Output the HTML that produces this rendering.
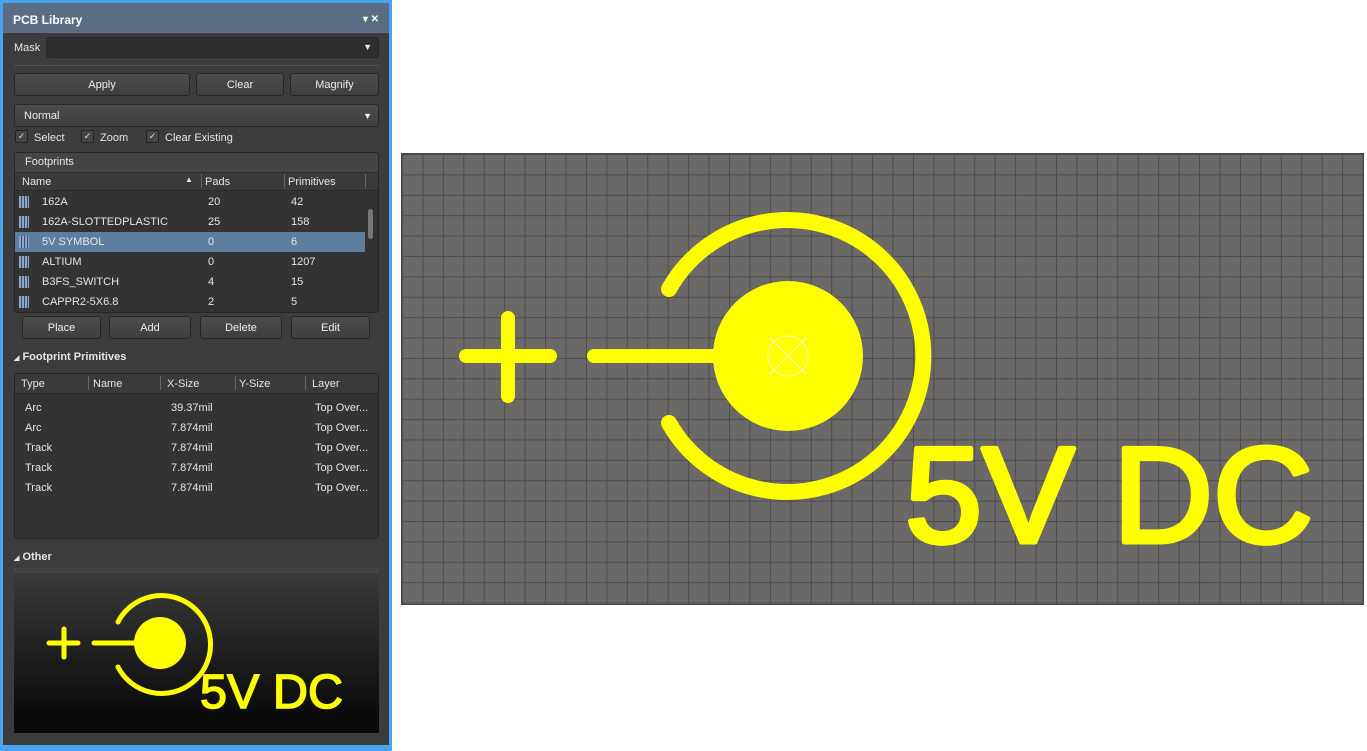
<!DOCTYPE html>
<html><head><meta charset="utf-8"><style>
*{box-sizing:border-box;margin:0;padding:0}
body{width:1367px;height:751px;background:#fff;position:relative;overflow:hidden;font-family:"Liberation Sans",sans-serif;font-size:11px;color:#e6e6e6}
.abs{position:absolute}
#panel{left:0;top:0;width:392px;height:751px;background:#4aa3ee}
#inner{left:3px;top:3px;width:386px;height:742px;background:#3c3c3c}
.title{left:0;top:0;width:386px;height:30px;background:#5b6d85;font-weight:bold;font-size:12px;color:#fff;padding:10px 10px}
.btn{position:absolute;height:23px;border:1px solid #262626;border-radius:3px;background:linear-gradient(#4c4c4c,#3e3e3e);text-align:center;line-height:23px;color:#eee}
.row{position:absolute;left:12px;width:350px;height:20px;line-height:20px}
.chip{position:absolute;left:4px;top:4px;width:10px;height:12px;background:repeating-linear-gradient(90deg,#8ea6c9 0 2px,#3c4a63 2px 3px)}
.cb{position:absolute;width:13px;height:13px;border:1px solid #222;background:#454545;border-radius:2px;color:#ddd;font-size:9px;line-height:11px;text-align:center}
#grid{left:401px;top:153px;width:963px;height:452px;background-color:#6b6967;
background-image:linear-gradient(90deg,#4e4c4a 1.2px,transparent 1.2px),linear-gradient(#4e4c4a 1.2px,transparent 1.2px);
background-size:20.45px 20.4px;border:1px solid #4a4846}
</style></head><body>
<div id="panel" class="abs"></div>
<div id="inner" class="abs">
 <div class="abs title">PCB Library<span style="position:absolute;right:10px;top:11px;font-size:10px">▾ ✕</span></div>
 <div class="abs" style="left:11px;top:39px">Mask</div>
 <div class="abs" style="left:43px;top:34px;width:333px;height:21px;background:#2f2f2f;border:1px solid #262626;border-radius:3px"><span style="position:absolute;right:6px;top:4px;font-size:9px">▼</span></div>
 <div class="abs" style="left:11px;top:62px;width:365px;height:1px;background:#505050"></div>
 <div class="btn" style="left:11px;top:70px;width:176px">Apply</div>
 <div class="btn" style="left:193px;top:70px;width:88px">Clear</div>
 <div class="btn" style="left:287px;top:70px;width:89px">Magnify</div>
 <div class="btn" style="left:11px;top:101px;width:365px;text-align:left;padding-left:9px">Normal<span style="position:absolute;right:6px;top:0;font-size:9px">▼</span></div>
 <div class="cb" style="left:12px;top:127px">✓</div><div class="abs" style="left:31px;top:129px">Select</div>
 <div class="cb" style="left:78px;top:127px">✓</div><div class="abs" style="left:97px;top:129px">Zoom</div>
 <div class="cb" style="left:143px;top:127px">✓</div><div class="abs" style="left:162px;top:129px">Clear Existing</div>
 <div class="abs" style="left:11px;top:149px;width:365px;height:161px;background:#333;border:1px solid #262626;border-radius:3px;overflow:hidden">
  <div style="height:19px;background:#444;padding:3px 10px">Footprints</div>
  <div style="height:19px;background:#3a3a3a;border-top:1px solid #2a2a2a;border-bottom:1px solid #2a2a2a;position:relative">
   <span class="abs" style="left:7px;top:3px">Name</span><span class="abs" style="left:170px;top:2px;font-size:8px">▲</span>
   <span class="abs" style="left:186px;top:1px;width:1px;height:14px;background:#666"></span>
   <span class="abs" style="left:190px;top:3px">Pads</span>
   <span class="abs" style="left:269px;top:1px;width:1px;height:14px;background:#666"></span>
   <span class="abs" style="left:273px;top:3px">Primitives</span>
   <span class="abs" style="left:350px;top:1px;width:1px;height:14px;background:#666"></span>
  </div>
  <div class="abs" style="left:0;top:39px;width:365px;height:120px">
   <div class="row" style="left:0;top:0"><i class="chip"></i><span class="abs" style="left:27px">162A</span><span class="abs" style="left:193px">20</span><span class="abs" style="left:276px">42</span></div>
   <div class="row" style="left:0;top:20px"><i class="chip"></i><span class="abs" style="left:27px">162A-SLOTTEDPLASTIC</span><span class="abs" style="left:193px">25</span><span class="abs" style="left:276px">158</span></div>
   <div class="row" style="left:0;top:40px;background:#5e7ea0"><i class="chip"></i><span class="abs" style="left:27px">5V SYMBOL</span><span class="abs" style="left:193px">0</span><span class="abs" style="left:276px">6</span></div>
   <div class="row" style="left:0;top:60px"><i class="chip"></i><span class="abs" style="left:27px">ALTIUM</span><span class="abs" style="left:193px">0</span><span class="abs" style="left:276px">1207</span></div>
   <div class="row" style="left:0;top:80px"><i class="chip"></i><span class="abs" style="left:27px">B3FS_SWITCH</span><span class="abs" style="left:193px">4</span><span class="abs" style="left:276px">15</span></div>
   <div class="row" style="left:0;top:100px"><i class="chip"></i><span class="abs" style="left:27px">CAPPR2-5X6.8</span><span class="abs" style="left:193px">2</span><span class="abs" style="left:276px">5</span></div>
   <div class="abs" style="left:353px;top:17px;width:5px;height:30px;background:#777;border-radius:3px"></div>
  </div>
 </div>
 <div class="btn" style="left:19px;top:313px;width:79px">Place</div>
 <div class="btn" style="left:106px;top:313px;width:82px">Add</div>
 <div class="btn" style="left:197px;top:313px;width:82px">Delete</div>
 <div class="btn" style="left:288px;top:313px;width:79px">Edit</div>
 <div class="abs" style="left:11px;top:348px;font-weight:bold"><span style="font-size:7px">◢</span> Footprint Primitives</div>
 <div class="abs" style="left:11px;top:370px;width:365px;height:166px;background:#333;border:1px solid #262626;border-radius:3px;overflow:hidden">
  <div style="height:20px;background:#3a3a3a;border-bottom:1px solid #2a2a2a;position:relative">
   <span class="abs" style="left:6px;top:4px">Type</span><span class="abs" style="left:73px;top:2px;width:1px;height:14px;background:#666"></span>
   <span class="abs" style="left:78px;top:4px">Name</span><span class="abs" style="left:145px;top:2px;width:1px;height:14px;background:#666"></span>
   <span class="abs" style="left:152px;top:4px">X-Size</span><span class="abs" style="left:220px;top:2px;width:1px;height:14px;background:#666"></span>
   <span class="abs" style="left:224px;top:4px">Y-Size</span><span class="abs" style="left:290px;top:2px;width:1px;height:14px;background:#666"></span>
   <span class="abs" style="left:297px;top:4px">Layer</span>
  </div>
  <div class="abs" style="left:10px;top:24px;line-height:20px">Arc<br>Arc<br>Track<br>Track<br>Track</div>
  <div class="abs" style="left:156px;top:24px;line-height:20px">39.37mil<br>7.874mil<br>7.874mil<br>7.874mil<br>7.874mil</div>
  <div class="abs" style="left:300px;top:24px;line-height:20px">Top Over...<br>Top Over...<br>Top Over...<br>Top Over...<br>Top Over...</div>
 </div>
 <div class="abs" style="left:11px;top:548px;font-weight:bold"><span style="font-size:7px">◢</span> Other</div>
 <div class="abs" style="left:11px;top:565px;width:365px;height:5px;background:#444"></div>
 <div class="abs" style="left:11px;top:570px;width:365px;height:160px;background:linear-gradient(#3a3a3a,#0a0a0a 90%)">
  <svg width="365" height="160" style="position:absolute;left:0;top:0">
   <g stroke="#ffff00" stroke-width="5" stroke-linecap="round" fill="none">
    <line x1="35" y1="70" x2="64" y2="70"/><line x1="50" y1="56" x2="50" y2="84"/>
    <line x1="80" y1="70" x2="125" y2="70"/>
    <path d="M104 49 A49 49 0 1 1 104 94"/>
   </g>
   <circle cx="146" cy="70" r="26" fill="#ffff00"/>
   <text x="186" y="135" font-family="Liberation Sans" font-size="48" fill="#ffff00" stroke="#ffff00" stroke-width="1.5" textLength="143" lengthAdjust="spacingAndGlyphs">5V DC</text>
  </svg>
 </div>
</div>
<div id="grid" class="abs"></div>
<svg class="abs" style="left:0;top:0" width="1367" height="751">
 <g stroke="#ffff00" stroke-linecap="round" fill="none" stroke-width="14">
  <line x1="466" y1="356" x2="550" y2="356"/><line x1="508" y1="318" x2="508" y2="396"/>
  <line x1="594" y1="356" x2="720" y2="356"/>
  <path d="M669 289 A136 136 0 1 1 669 423" stroke-width="16"/>
 </g>
 <circle cx="788" cy="356" r="75" fill="#ffff00"/>
 <circle cx="788" cy="356" r="20" fill="none" stroke="#fffcc0" stroke-width="1"/>
 <path d="M769 337L807 375M807 337L769 375" stroke="#fffcc0" stroke-width="1"/>
 <text x="905" y="542" font-family="Liberation Sans" font-size="136" fill="#ffff00" stroke="#ffff00" stroke-width="5" stroke-linejoin="round" textLength="408" lengthAdjust="spacingAndGlyphs">5V DC</text>
</svg>
</body></html>
